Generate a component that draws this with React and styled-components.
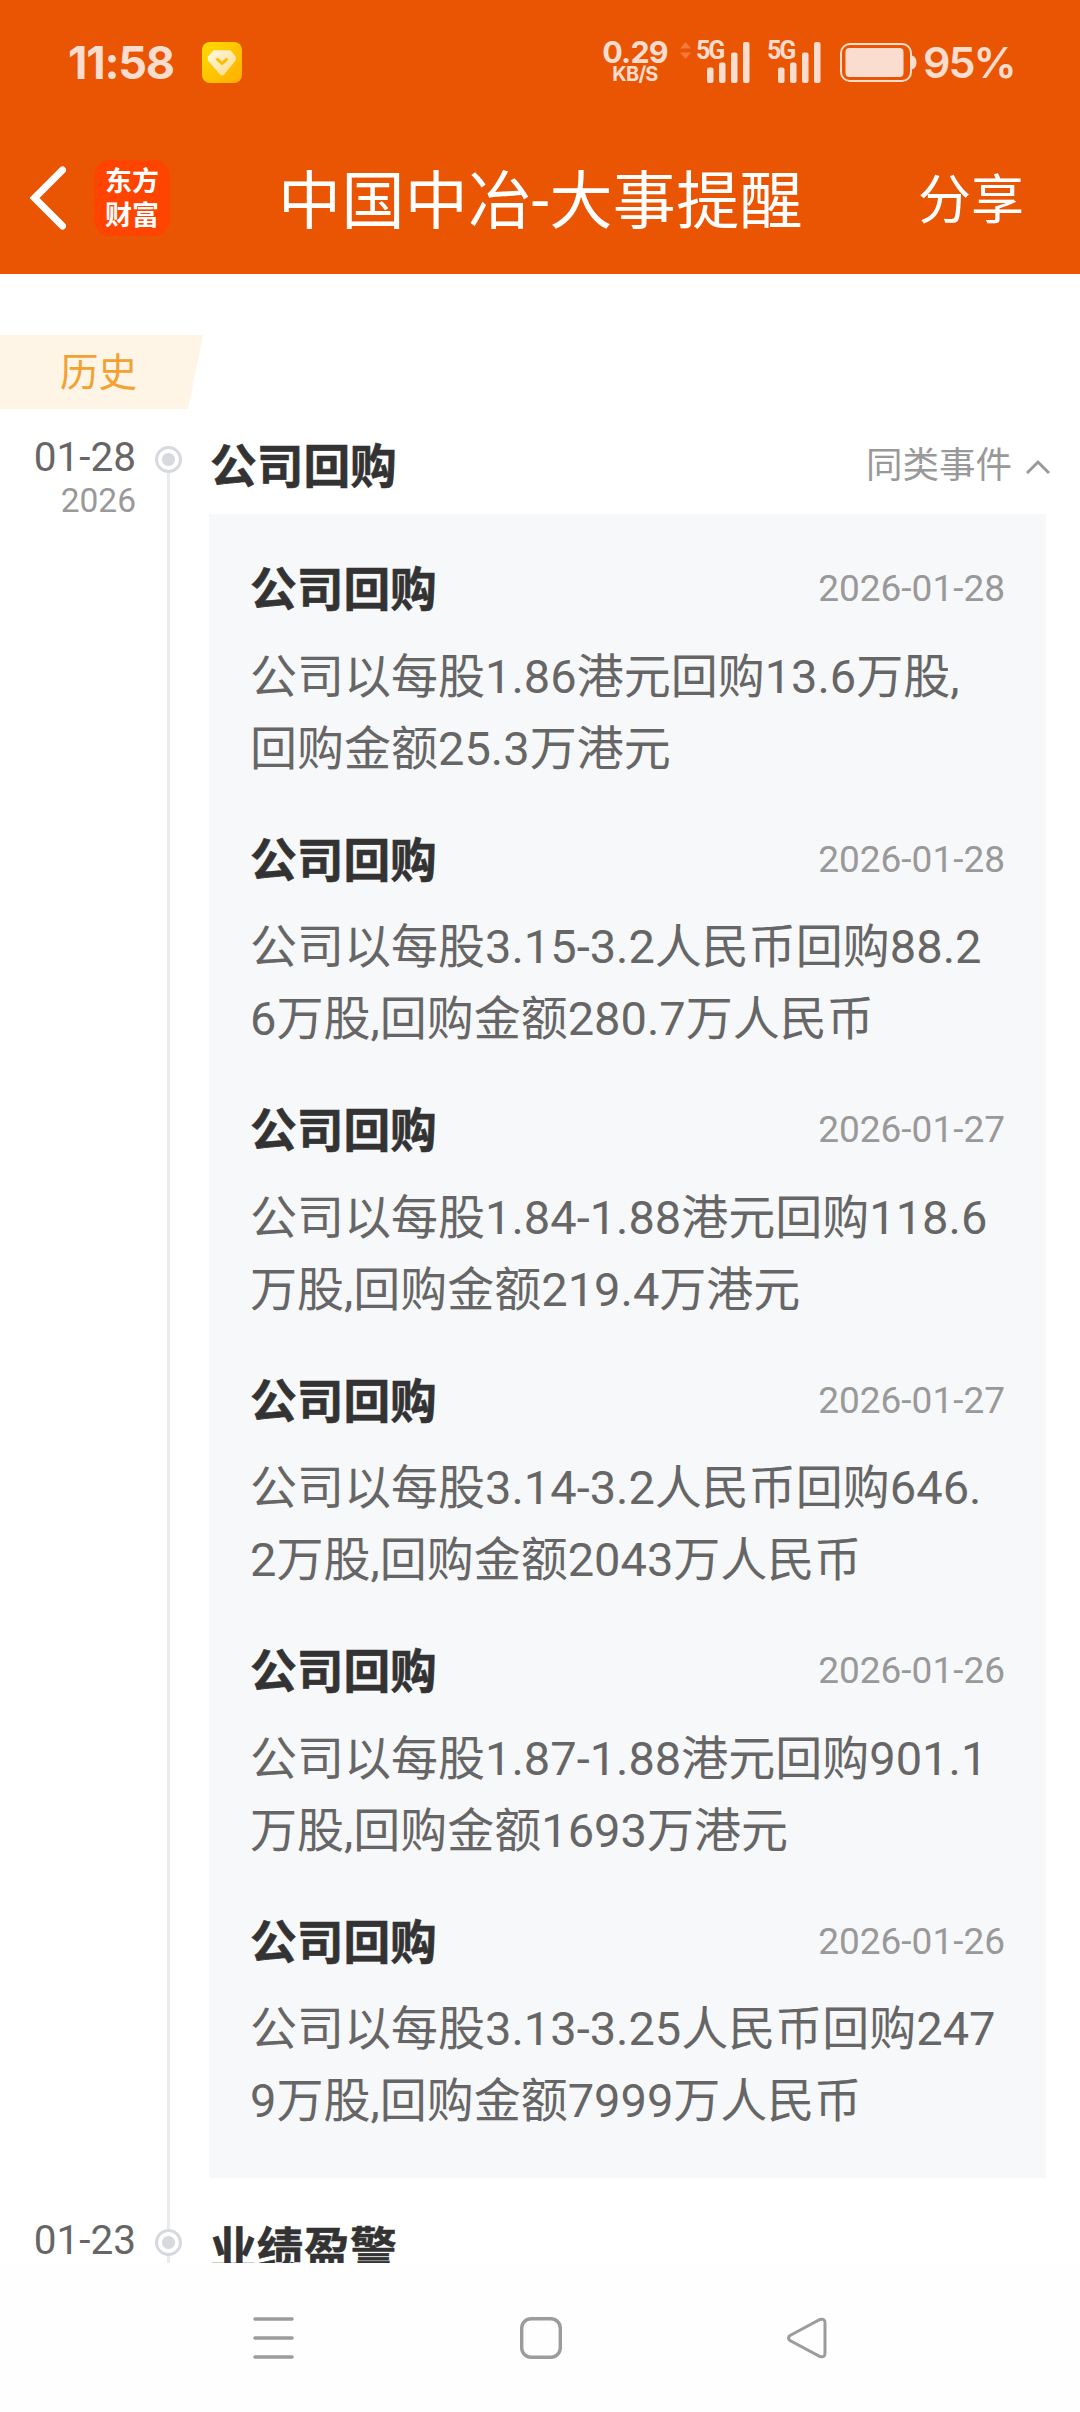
import React from 'react';
import styled, { createGlobalStyle } from 'styled-components';

const BUYBACKS = [
  { id: 1, date: '2026-01-28', text: '公司以每股1.86港元回购13.6万股,\n回购金额25.3万港元' },
  { id: 2, date: '2026-01-28', text: '公司以每股3.15-3.2人民币回购88.2\n6万股,回购金额280.7万人民币' },
  { id: 3, date: '2026-01-27', text: '公司以每股1.84-1.88港元回购118.6\n万股,回购金额219.4万港元' },
  { id: 4, date: '2026-01-27', text: '公司以每股3.14-3.2人民币回购646.\n2万股,回购金额2043万人民币' },
  { id: 5, date: '2026-01-26', text: '公司以每股1.87-1.88港元回购901.1\n万股,回购金额1693万港元' },
  { id: 6, date: '2026-01-26', text: '公司以每股3.13-3.25人民币回购247\n9万股,回购金额7999万人民币' },
];

const Signal = () => (
  <SignalBox>
    <NetworkType>5G</NetworkType>
    <svg width="43" height="41" viewBox="0 0 43 41" fill="#fbddcf">
      <rect x="0" y="25.500" width="6.500" height="15.500" rx="2" />
      <rect x="12" y="20.500" width="6.500" height="20.500" rx="2" />
      <rect x="24" y="10.500" width="6.500" height="30.500" rx="2" />
      <rect x="36" y="0" width="6.500" height="41" rx="2" />
    </svg>
  </SignalBox>
);

const StatusBar = () => (
  <Status>
    <Clock>11:58</Clock>
    <svg width="40" height="41" viewBox="0 0 40 41">
      <defs>
        <linearGradient id="gold" x1="0" y1="0" x2="1" y2="1">
          <stop offset="0" stopColor="#ffdc00" />
          <stop offset="1" stopColor="#ffae00" />
        </linearGradient>
        <linearGradient id="gem" x1="0" y1="0" x2="1" y2="1">
          <stop offset="0" stopColor="#fff8df" />
          <stop offset="1" stopColor="#ffdb8c" />
        </linearGradient>
      </defs>
      <rect width="40" height="41" rx="8" fill="url(#gold)" />
      <path d="M12 9H28L33 15V18L21.500 32Q20 33.500 18.500 32L6.500 18V15Z" fill="url(#gem)" stroke="url(#gem)" strokeLinejoin="round" strokeWidth="1.500" />
      <path d="M14.500 16.500L20 21.500L25.500 16.500" fill="none" stroke="#ffbd00" strokeWidth="3" />
    </svg>
    <Spacer />
    <Speed>
      <SpeedValue>0.29</SpeedValue>
      <SpeedUnit>KB/S</SpeedUnit>
    </Speed>
    <Traffic width="11" height="17" viewBox="0 0 11 17" fill="#f5783c">
      <path d="M5.500 0L11 6.500H0Z" />
      <path d="M5.500 17L0 10.500H11Z" />
    </Traffic>
    <Signal />
    <Signal />
    <Battery width="77" height="39" viewBox="0 0 77 39">
      <rect x="1" y="1" width="70" height="37" rx="9" fill="none" stroke="#fbddcf" strokeWidth="2" />
      <rect x="5.500" y="5" width="58" height="29" rx="4" fill="#fbddcf" />
      <path d="M72 12.500Q76.500 14 76.500 19.500T72 26.500Z" fill="#fbddcf" />
    </Battery>
    <Percent>95%</Percent>
  </Status>
);

const TimelineRow = ({ date, year, title, action, first, children }) => (
  <Row>
    <DateColumn>
      <Day>{date}</Day>
      {year ? <Year>{year}</Year> : null}
    </DateColumn>
    <Rail>
      <Lead $hidden={first} />
      <Dot />
      <Line />
    </Rail>
    <Content>
      <EventHeader>
        <EventTitle>{title}</EventTitle>
        {action}
      </EventHeader>
      {children}
    </Content>
  </Row>
);

const App = () => (
  <Page>
    <GlobalStyle />
    <Header>
      <StatusBar />
      <TitleBar>
        <svg width="36" height="64" viewBox="0 0 36 64" fill="none" stroke="#fff" strokeWidth="7" strokeLinecap="round">
          <path d="M32.500 4L4.500 32L32.500 60" />
        </svg>
        <Logo>
          <span>东方</span>
          <span>财富</span>
        </Logo>
        <PageTitle>中国中冶-大事提醒</PageTitle>
        <Share>分享</Share>
      </TitleBar>
    </Header>
    <Main>
      <Tag>历史</Tag>
      <TimelineRow
        first
        date="01-28"
        year="2026"
        title="公司回购"
        action={(
          <Similar>
            同类事件
            <svg width="24" height="15" viewBox="0 0 24 15" fill="none" stroke="#999" strokeWidth="3">
              <path d="M1 14L12 3L23 14" />
            </svg>
          </Similar>
        )}
      >
        <Panel>
          {BUYBACKS.map((item) => (
            <Item key={item.id}>
              <ItemHeader>
                <EventTitle>公司回购</EventTitle>
                <ItemDate>{item.date}</ItemDate>
              </ItemHeader>
              <ItemText>{item.text}</ItemText>
            </Item>
          ))}
        </Panel>
      </TimelineRow>
      <TimelineRow date="01-23" title="业绩盈警" />
    </Main>
    <NavBar>
      <svg width="41" height="42" viewBox="0 0 41 42" stroke="#9c9c9c" strokeWidth="3.600" strokeLinecap="round">
        <path d="M2 2H39M2 21H39M2 40H39" />
      </svg>
      <svg width="42" height="42" viewBox="0 0 42 42" fill="none" stroke="#9c9c9c" strokeWidth="3.400">
        <rect x="1.700" y="1.700" width="38.600" height="38.600" rx="9.500" />
      </svg>
      <svg width="40" height="42" viewBox="0 0 40 42" fill="none" stroke="#9c9c9c" strokeWidth="3">
        <path d="M3 18.500L33 2.500Q38 1 38 6V36Q38 41 33 39.500L3 23.500Q0 21 3 18.500Z" />
      </svg>
    </NavBar>
  </Page>
);

export default App;

const GlobalStyle = createGlobalStyle`
  * {
    box-sizing: border-box;
  }

  body {
    margin: 0;
    background-color: #fff;
    font-family: Roboto, "Noto Sans CJK SC", sans-serif;
  }

  svg {
    display: block;
    flex-shrink: 0;
  }
`;

const Page = styled.div`
  display: flex;
  flex-direction: column;
  width: 1080px;
  height: 2412px;
  overflow: hidden;
`;

const Header = styled.header`
  flex-shrink: 0;
  height: 274px;
  background-color: #ea5504;
  color: #fff;
`;

const Status = styled.div`
  display: flex;
  align-items: center;
  height: 125px;
  padding: 0 68px;
  color: #fbddcf;
  font-family: Inter, sans-serif;
  font-weight: 600;
`;

const Clock = styled.div`
  width: 134px;
  font-size: 45px;
  font-weight: 700;
  line-height: 1;
  letter-spacing: -1.2px;
  white-space: nowrap;
`;

const Spacer = styled.div`
  flex: 1;
`;

const Speed = styled.div`
  display: flex;
  flex-direction: column;
  align-items: center;
  width: 66px;
`;

const SpeedValue = styled.div`
  margin-top: -4px;
  font-size: 30.5px;
  font-weight: 700;
  line-height: 28px;
  letter-spacing: -0.8px;
`;

const SpeedUnit = styled.div`
  font-size: 20px;
  font-weight: 700;
  line-height: 17px;
  letter-spacing: -0.8px;
`;

const Traffic = styled.svg`
  margin: -24px 5px 0 12px;
`;

const SignalBox = styled.div`
  position: relative;
  width: 71px;
  padding-left: 11px;
`;

const NetworkType = styled.div`
  position: absolute;
  left: 0;
  top: -1px;
  font-family: Roboto, sans-serif;
  font-size: 25px;
  font-weight: 700;
  line-height: 20px;
  letter-spacing: -2px;
`;

const Battery = styled.svg`
  margin: 0 6px 0 2px;
`;

const Percent = styled.div`
  width: 89px;
  font-size: 43px;
  line-height: 1;
  letter-spacing: -2px;
  white-space: nowrap;
`;

const TitleBar = styled.div`
  display: flex;
  align-items: center;
  height: 146px;
  padding: 0 56px 0 30px;
`;

const Logo = styled.div`
  display: flex;
  flex-direction: column;
  align-items: center;
  width: 76px;
  height: 76px;
  margin-left: 28px;
  border-radius: 16px;
  background-color: #ff4400;
  font-family: "Noto Sans CJK SC", sans-serif;
  font-size: 27px;
  font-weight: 700;
  line-height: 34px;

  span:first-child {
    margin-top: 3px;
  }
`;

const PageTitle = styled.h1`
  flex: 1;
  margin: 7px 0 0 108px;
  font-size: 63px;
  font-weight: 400;
  line-height: 80px;
  letter-spacing: 0.4px;
  white-space: nowrap;
`;

const Share = styled.div`
  margin-top: 6px;
  font-size: 53px;
  line-height: 80px;
`;

const Main = styled.main`
  flex: 1;
  min-height: 0;
  padding-top: 61px;
  overflow: hidden;
`;

const Tag = styled.div`
  width: 203px;
  height: 74px;
  margin-bottom: 23px;
  padding-left: 60px;
  background-color: #fef5e7;
  clip-path: polygon(0 0, 100% 0, 188px 100%, 0 100%);
  color: #f2a132;
  font-size: 38.5px;
  line-height: 75px;
`;

const Row = styled.section`
  display: flex;
`;

const DateColumn = styled.div`
  width: 136px;
  padding-top: 3px;
  text-align: right;
`;

const Day = styled.div`
  color: #666;
  font-size: 40.5px;
  line-height: 44px;
`;

const Year = styled.div`
  color: #999;
  font-size: 33.5px;
  line-height: 43px;
`;

const Rail = styled.div`
  display: flex;
  flex-direction: column;
  align-items: center;
  width: 27px;
  margin-left: 19px;
`;

const Line = styled.div`
  flex: 1;
  width: 3px;
  background-color: #ebebeb;
`;

const Lead = styled.div`
  width: 3px;
  height: 14px;
  background-color: ${({ $hidden }) => ($hidden ? 'transparent' : '#ebebeb')};
`;

const Dot = styled.div`
  width: 27px;
  height: 27px;
  border: 3px solid #d6d9de;
  border-radius: 50%;
  background: radial-gradient(circle, #d6d9de 6px, #fff 7px);
`;

const Content = styled.div`
  flex: 1;
  margin-left: 27px;
  padding-bottom: 37px;
`;

const EventHeader = styled.div`
  display: flex;
  align-items: center;
  justify-content: space-between;
  height: 82px;
  padding: 0 30px 14px 1px;
`;

const EventTitle = styled.h2`
  margin: 0;
  padding-top: 3px;
  color: #333;
  font-size: 46.7px;
  font-weight: 700;
  line-height: 65px;
  -webkit-text-stroke: 0.6px #333;
`;

const Similar = styled.div`
  display: flex;
  align-items: center;
  gap: 14px;
  color: #999;
  font-size: 36.5px;
  line-height: 60px;
`;

const Panel = styled.div`
  width: 837px;
  padding: 41px 41px 0;
  background-color: #f7f8fa;
`;

const Item = styled.article`
  height: 270.5px;
`;

const ItemHeader = styled.div`
  display: flex;
  align-items: center;
  justify-content: space-between;
  margin-bottom: 17.5px;
`;

const ItemDate = styled.time`
  margin-top: -1px;
  color: #999;
  font-size: 37px;
`;

const ItemText = styled.p`
  margin: 0;
  color: #666;
  font-size: 47px;
  line-height: 72px;
  white-space: pre;
`;

const NavBar = styled.nav`
  display: flex;
  flex-shrink: 0;
  align-items: center;
  justify-content: space-between;
  height: 149px;
  padding: 0 253px;
  background-color: #fefefe;
`;
